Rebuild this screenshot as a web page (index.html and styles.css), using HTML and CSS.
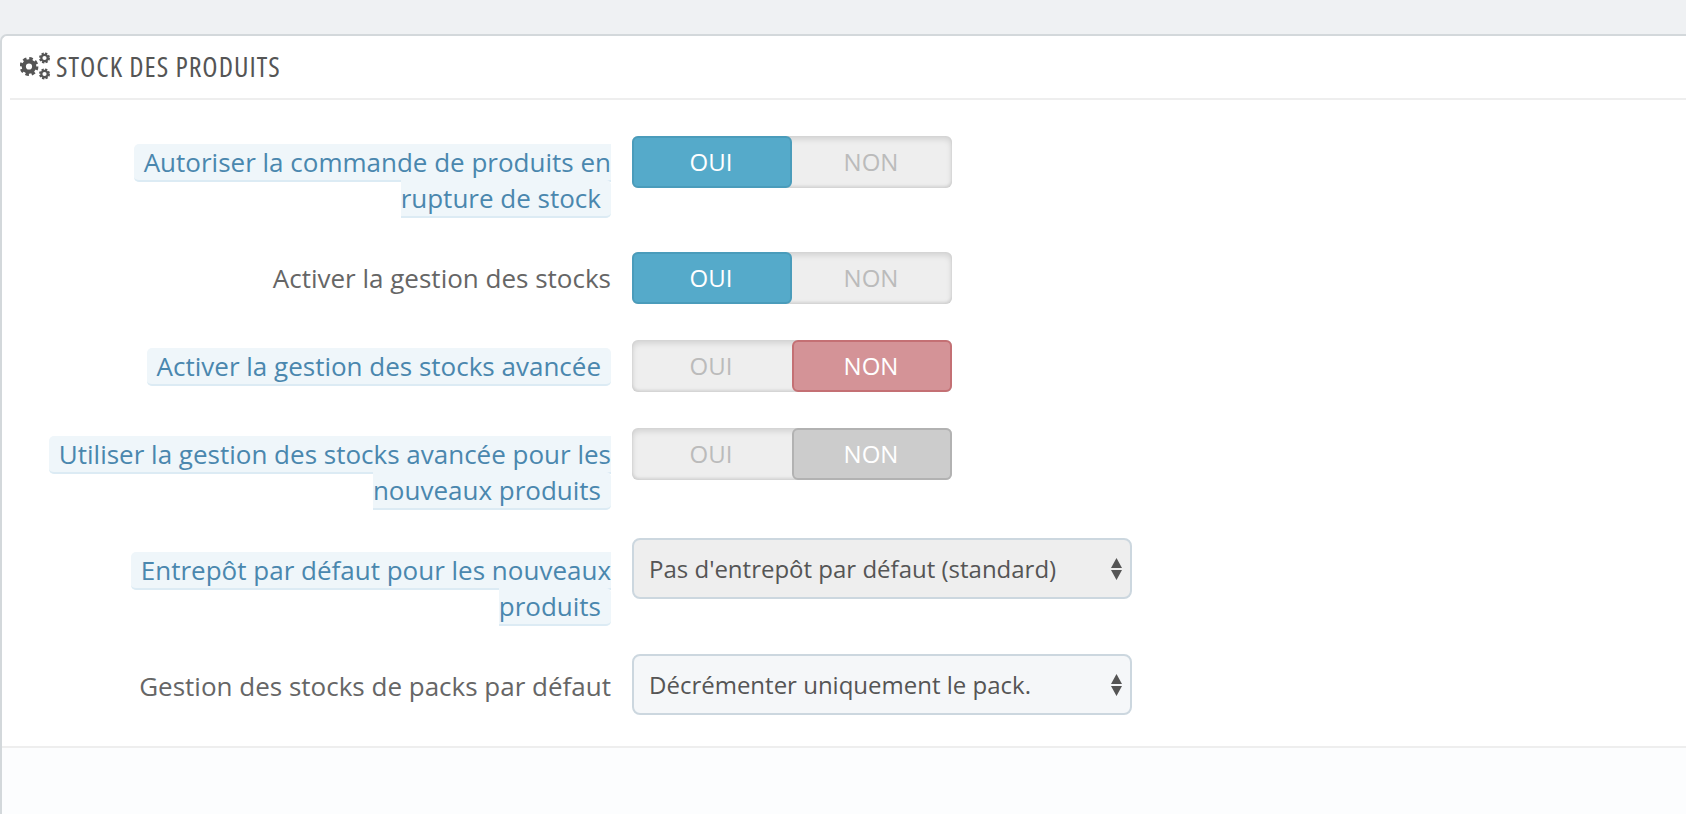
FILE: index.html
```html
<!DOCTYPE html>
<html lang="fr">
<head>
<meta charset="utf-8">
<title>Stock des produits</title>
<link rel="stylesheet" href="styles.css">
</head>
<body>
<section class="panel">
  <h3 class="heading">
    <svg class="cogs" viewBox="0 0 30 28" aria-hidden="true">
      <circle class="gear-core" cx="9" cy="14.500" r="5.2"/>
      <circle class="gear-teeth" cx="9" cy="14.500" r="7.7"/>
      <circle class="gear-small" cx="24.5" cy="6" r="3.2"/>
      <circle class="gear-small-teeth" cx="24.5" cy="6" r="4.4"/>
      <circle class="gear-small" cx="24.5" cy="22" r="3.2"/>
      <circle class="gear-small-teeth" cx="24.5" cy="22" r="4.4"/>
    </svg>
    STOCK DES PRODUITS
  </h3>
  <div class="form">
    <div class="row tall">
      <div class="label"><span class="tip">Autoriser la commande de produits en rupture de stock </span></div>
      <div class="toggle"><span class="opt on">OUI</span><span class="opt">NON</span></div>
    </div>
    <div class="row">
      <div class="label">Activer la gestion des stocks</div>
      <div class="toggle"><span class="opt on">OUI</span><span class="opt">NON</span></div>
    </div>
    <div class="row">
      <div class="label"><span class="tip">Activer la gestion des stocks avancée </span></div>
      <div class="toggle"><span class="opt">OUI</span><span class="opt off">NON</span></div>
    </div>
    <div class="row tall before-select">
      <div class="label"><span class="tip">Utiliser la gestion des stocks avancée pour les nouveaux produits </span></div>
      <div class="toggle"><span class="opt">OUI</span><span class="opt disabled">NON</span></div>
    </div>
    <div class="row tall select-row">
      <div class="label"><span class="tip">Entrepôt par défaut pour les nouveaux produits </span></div>
      <div class="select-wrap">
        <select class="select grey"><option>Pas d'entrepôt par défaut (standard)</option></select>
        <svg class="arrows" viewBox="0 0 11 22" aria-hidden="true"><path d="M5.500 0L11 10H0zM5.500 22L0 12h11z"/></svg>
      </div>
    </div>
    <div class="row last select-row">
      <div class="label">Gestion des stocks de packs par défaut</div>
      <div class="select-wrap">
        <select class="select"><option>Décrémenter uniquement le pack.</option></select>
        <svg class="arrows" viewBox="0 0 11 22" aria-hidden="true"><path d="M5.500 0L11 10H0zM5.500 22L0 12h11z"/></svg>
      </div>
    </div>
  </div>
  <div class="footer"></div>
</section>
</body>
</html>
```
FILE: styles.css
```css
* { box-sizing: border-box; }
html, body { height: 100%; }
body {
  margin: 0;
  padding-top: 34px;
  background: #eff1f3;
  font-family: "Open Sans", sans-serif;
  font-size: 24px;
  color: #666;
  overflow: hidden;
}
.panel {
  display: flex;
  flex-direction: column;
  height: 780px;
  background: #fff;
  border-top: 2px solid #d3d8db;
  border-left: 2px solid #d3d8db;
  border-top-left-radius: 7px;
}
.heading {
  display: flex;
  align-items: center;
  gap: 6px;
  height: 64px;
  margin: 0 0 0 8px;
  padding: 0 0 3px 10px;
  border-bottom: 2px solid #eeeeee;
  font-family: "Open Sans", sans-serif;
  font-stretch: 75%;
  font-size: 28px;
  font-weight: 500;
  letter-spacing: 1px;
  color: #555;
}
.cogs { width: 30px; height: 28px; flex: none; }
.gear-core { fill: none; stroke: #555; stroke-width: 4.2; }
.gear-teeth { fill: none; stroke: #555; stroke-width: 3.4; stroke-dasharray: 3.4 2.65; }
.gear-small { fill: none; stroke: #555; stroke-width: 2.2; }
.gear-small-teeth { fill: none; stroke: #555; stroke-width: 2.2; stroke-dasharray: 2.2 1.26; }
.form { padding-top: 36px; }
.row { display: flex; margin-bottom: 36px; }
.row.tall { height: 80px; }
.row.before-select { height: 74px; }
.row.last { margin-bottom: 31px; }
.label {
  width: 610px;
  flex: none;
  padding: 8px 1px 0 40px;
  font-size: 26px;
  line-height: 36px;
  text-align: right;
}
.select-row .label { padding-top: 14px; }
.tip {
  padding: 0 10px 0 10px;
  background: #eff6fa;
  border-bottom: 2px solid #dcebf4;
  border-radius: 5px;
  color: #4a87ae;
}
.toggle {
  display: flex;
  width: 320px;
  height: 52px;
  margin-left: 20px;
  flex: none;
  border-radius: 6px;
  background: #eeeeee;
  box-shadow: inset 0 3px 6px rgba(0, 0, 0, .13), inset 0 -2px 3px rgba(0, 0, 0, .1);
}
.opt {
  flex: none;
  width: 50%;
  display: flex;
  align-items: center;
  justify-content: center;
  padding: 0 2px 2px 0;
  color: #bbb;
  border-radius: 6px;
}
.opt.on { background: #55aaca; border: 2px solid #4a9cbb; color: #fff; }
.opt.off { background: #d49397; border: 2px solid #c47074; color: #fff; }
.opt.disabled { background: #ccc; border: 2px solid #b2b2b2; color: #fff; }
.select-wrap { position: relative; width: 500px; margin-left: 20px; flex: none; }
.select {
  appearance: none;
  display: block;
  width: 100%;
  height: 61px;
  padding: 0 40px 0 15px;
  border: 2px solid #ccd7df;
  border-radius: 8px;
  background: #f5f7f9;
  font-family: "Open Sans", sans-serif;
  font-size: 24px;
  color: #555;
}
.select.grey { background: #eeeeee; }
.arrows {
  position: absolute;
  right: 10px;
  top: 20px;
  width: 11px;
  height: 22px;
  fill: #555;
  pointer-events: none;
}
.footer {
  flex: 1;
  background: #fcfdfe;
  border-top: 2px solid #eeeeee;
}
```
